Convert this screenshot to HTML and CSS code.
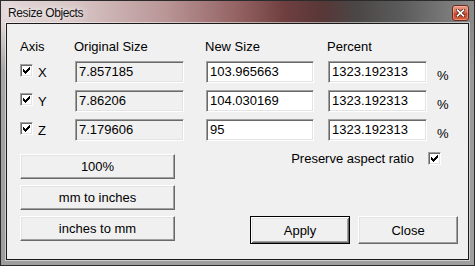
FILE: index.html
```html
<!DOCTYPE html>
<html>
<head>
<meta charset="utf-8">
<title>Resize Objects</title>
<link rel="stylesheet" href="styles.css">
</head>
<body>
<div class="window">
  <div class="titlebar">
    <span class="title">Resize Objects</span>
    <span class="close">
      <svg width="9" height="8" viewBox="0 0 9 8"><path d="M1.5 1.2L7.5 6.8M7.5 1.2L1.5 6.8" stroke="#4a1c14" stroke-width="3.2" stroke-linecap="square"/><path d="M1.5 1.2L7.5 6.8M7.5 1.2L1.5 6.8" stroke="#fff" stroke-width="1.7" stroke-linecap="square"/></svg>
    </span>
  </div>
  <div class="frame">
    <div class="client">
      <div class="row head">
        <span class="c-axis">Axis</span>
        <span class="c-orig">Original Size</span>
        <span class="c-new">New Size</span>
        <span class="c-pct">Percent</span>
      </div>
      <div class="row">
        <span class="c-axis"><span class="check"><svg width="11" height="11" viewBox="1 1 11 11"><path d="M3 5h1v3H3zM4 6h1v3H4zM5 7h1v3H5zM6 6h1v3H6zM7 5h1v3H7zM8 4h1v3H8zM9 3h1v3H9z" fill="#000"/></svg></span><span class="axis-label">X</span></span>
        <span class="c-orig field ro">7.857185</span>
        <span class="c-new field">103.965663</span>
        <span class="c-pct field">1323.192313</span>
        <span class="unit">%</span>
      </div>
      <div class="row">
        <span class="c-axis"><span class="check"><svg width="11" height="11" viewBox="1 1 11 11"><path d="M3 5h1v3H3zM4 6h1v3H4zM5 7h1v3H5zM6 6h1v3H6zM7 5h1v3H7zM8 4h1v3H8zM9 3h1v3H9z" fill="#000"/></svg></span><span class="axis-label">Y</span></span>
        <span class="c-orig field ro">7.86206</span>
        <span class="c-new field">104.030169</span>
        <span class="c-pct field">1323.192313</span>
        <span class="unit">%</span>
      </div>
      <div class="row last">
        <span class="c-axis"><span class="check"><svg width="11" height="11" viewBox="1 1 11 11"><path d="M3 5h1v3H3zM4 6h1v3H4zM5 7h1v3H5zM6 6h1v3H6zM7 5h1v3H7zM8 4h1v3H8zM9 3h1v3H9z" fill="#000"/></svg></span><span class="axis-label">Z</span></span>
        <span class="c-orig field ro">7.179606</span>
        <span class="c-new field">95</span>
        <span class="c-pct field">1323.192313</span>
        <span class="unit">%</span>
      </div>
      <div class="bottom">
        <div class="left-btns">
          <div class="btn">100%</div>
          <div class="btn">mm to inches</div>
          <div class="btn">inches to mm</div>
        </div>
        <div class="right">
          <div class="preserve">
            <span>Preserve aspect ratio</span>
            <span class="check"><svg width="11" height="11" viewBox="1 1 11 11"><path d="M3 5h1v3H3zM4 6h1v3H4zM5 7h1v3H5zM6 6h1v3H6zM7 5h1v3H7zM8 4h1v3H8zM9 3h1v3H9z" fill="#000"/></svg></span>
          </div>
          <div class="actions">
            <div class="btn action default">Apply</div>
            <div class="btn action">Close</div>
          </div>
        </div>
      </div>
    </div>
  </div>
</div>
</body>
</html>
```

FILE: styles.css
```css
html, body {
  margin: 0;
  padding: 0;
}

body {
  width: 475px;
  height: 266px;
  overflow: hidden;
  font-family: "Liberation Sans", Arial, sans-serif;
  font-size: 13px;
  color: #000;
}

.window {
  box-sizing: border-box;
  width: 475px;
  height: 266px;
  border: 1px solid #2b2b2b;
  display: flex;
  flex-direction: column;
  background:
    linear-gradient(to bottom, rgba(156,156,156,0) 0, rgba(156,156,156,0) 22px, rgba(156,156,156,0.85) 70px, rgba(158,158,158,1) 100%),
    linear-gradient(to right, #e3d8d8 0%, #d9c7c7 15%, #b99596 35%, #946263 50%, #6f3f40 60%, #583737 68%, #4b4646 75%, #5c5c5c 85%, #8b8b8b 100%);
}

.titlebar {
  height: 21px;
  display: flex;
  align-items: flex-start;
}

.title {
  margin: 5px 0 0 7px;
  font-size: 12px;
  line-height: 14px;
  letter-spacing: -0.4px;
  color: #111;
  text-shadow: 0 0 6px rgba(255,255,255,0.9), 0 0 10px rgba(255,255,255,0.7);
}

.close {
  box-sizing: border-box;
  margin: 4px 5px 0 auto;
  width: 17px;
  height: 16px;
  border: 1px solid #6e2a1e;
  border-radius: 3px;
  background: linear-gradient(to bottom, #eaa08c 0%, #d8684f 45%, #c4432a 55%, #d6603f 100%);
  box-shadow: inset 0 0 0 1px rgba(255,200,180,0.45);
  display: flex;
  align-items: center;
  justify-content: center;
}

.close svg {
  display: block;
}

.frame {
  flex: 1;
  display: flex;
  padding: 1px 5px 5px 5px;
}

.client {
  flex: 1;
  border: 1px solid #1a1a1a;
  box-shadow: 0 0 0 1px rgba(255,255,255,0.5);
  background: #f0f0f0;
  padding: 15px 0 0 13px;
}

.row {
  display: flex;
  height: 22px;
  align-items: center;
  margin-bottom: 7px;
}

.row.last {
  margin-bottom: 0;
}

.row.head {
  height: 15px;
  align-items: flex-start;
  line-height: 15px;
}

.head span {
  text-indent: -1px;
}

.c-axis {
  width: 55px;
  display: flex;
  align-items: center;
  height: 100%;
}

.head .c-axis {
  text-indent: 0;
}

.c-orig {
  width: 109px;
  margin-right: 22px;
}

.c-new {
  width: 108px;
  margin-right: 14px;
}

.c-pct {
  width: 99px;
}

.field {
  box-sizing: border-box;
  height: 22px;
  line-height: 20px;
  padding-left: 3px;
  background: #fff;
  border: 1px solid;
  border-color: #a0a0a0 #ffffff #ffffff #a0a0a0;
  box-shadow: inset 1px 1px #696969, inset -1px -1px #e3e3e3;
  white-space: nowrap;
}

.field.ro {
  background: #f0f0f0;
}

.check {
  box-sizing: border-box;
  width: 13px;
  height: 13px;
  flex: none;
  background: #fff;
  border: 1px solid;
  border-color: #a0a0a0 #ffffff #ffffff #a0a0a0;
  box-shadow: inset 1px 1px #696969, inset -1px -1px #e3e3e3;
}

.check svg {
  display: block;
}

.c-axis .check {
  align-self: flex-start;
  margin-top: 3px;
}

.axis-label {
  margin-left: 5px;
  line-height: 15px;
}

.unit {
  margin-left: 10px;
  align-self: flex-start;
  margin-top: 7px;
  line-height: 15px;
}

.bottom {
  display: flex;
  height: 93px;
  margin-top: 10px;
}

.left-btns {
  width: 155px;
  padding-top: 3px;
  display: flex;
  flex-direction: column;
  gap: 6px;
}

.btn {
  box-sizing: border-box;
  height: 25px;
  background: #f0f0f0;
  border: 1px solid;
  border-color: #ffffff #696969 #696969 #ffffff;
  box-shadow: inset -1px -1px #a0a0a0, inset 1px 1px #e3e3e3;
  display: flex;
  align-items: center;
  justify-content: center;
  line-height: 15px;
}

.right {
  flex: 1;
  display: flex;
  flex-direction: column;
  padding-right: 10px;
}

.preserve {
  display: flex;
  justify-content: flex-end;
  align-items: center;
  gap: 14px;
  height: 15px;
  line-height: 15px;
  padding-right: 17px;
}

.actions {
  margin-top: auto;
  display: flex;
  justify-content: flex-end;
  gap: 8px;
}

.btn.action {
  width: 100px;
  height: 28px;
}

.btn.default {
  border: 1px solid #000;
  box-shadow: inset 1px 1px #ffffff, inset -1px -1px #696969, inset 2px 2px #e3e3e3, inset -2px -2px #a0a0a0;
}
```
